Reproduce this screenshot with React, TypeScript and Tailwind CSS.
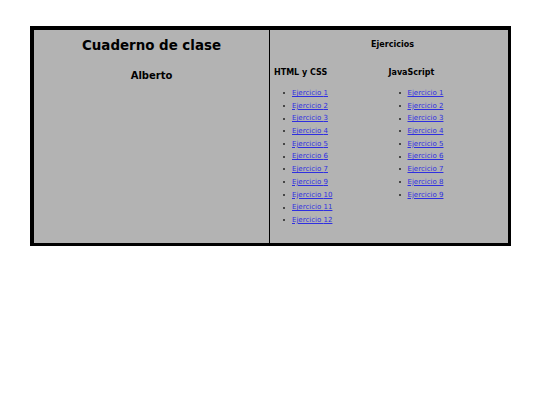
import React from "react";

const html = [1, 2, 3, 4, 5, 6, 7, 9, 10, 11, 12];
const js = [1, 2, 3, 4, 5, 6, 7, 8, 9];

function List({ items }: { items: number[] }) {
  return (
    <ul className="mt-[10px]">
      {items.map((n) => (
        <li key={n} className="flex items-center h-[12.7px] pl-[9px]">
          <span className="w-[2px] h-[2px] bg-[#222] rounded-full mr-[7px]" />
          <a href="#" className="text-[#2f2fe0] underline decoration-[#2f2fe0] text-[7px] leading-[12.7px]">
            Ejercicio {n}
          </a>
        </li>
      ))}
    </ul>
  );
}

export default function App() {
  return (
    <div className="w-[540px] h-[405px] bg-white pt-[26px] pl-[30px]" style={{ fontFamily: '"DejaVu Sans", Verdana, sans-serif' }}>
      <div className="w-[481px] h-[220px] border-l-4 border-t-4 border-r-[3px] border-b-[3px] border-black bg-[#b3b3b3] flex">
        <div className="w-[236px] border-r border-black flex flex-col items-center pt-[8px]">
          <h1 className="font-bold text-[13.4px] leading-[16px] text-black">Cuaderno de clase</h1>
          <h2 className="font-bold text-[10px] leading-[12px] text-black mt-[16px]">Alberto</h2>
        </div>
        <div className="flex-1 pl-[4px] pr-[3px] pt-[10px]">
          <div className="text-center font-bold text-[8px] leading-[9px] text-black pl-[6px]">Ejercicios</div>
          <div className="grid grid-cols-2 mt-[19px]">
            <div>
              <div className="font-bold text-[8px] leading-[9px] text-black">HTML y CSS</div>
              <List items={html} />
            </div>
            <div>
              <div className="font-bold text-[8px] leading-[9px] text-black -ml-[1px]">JavaScript</div>
              <List items={js} />
            </div>
          </div>
        </div>
      </div>
    </div>
  );
}
